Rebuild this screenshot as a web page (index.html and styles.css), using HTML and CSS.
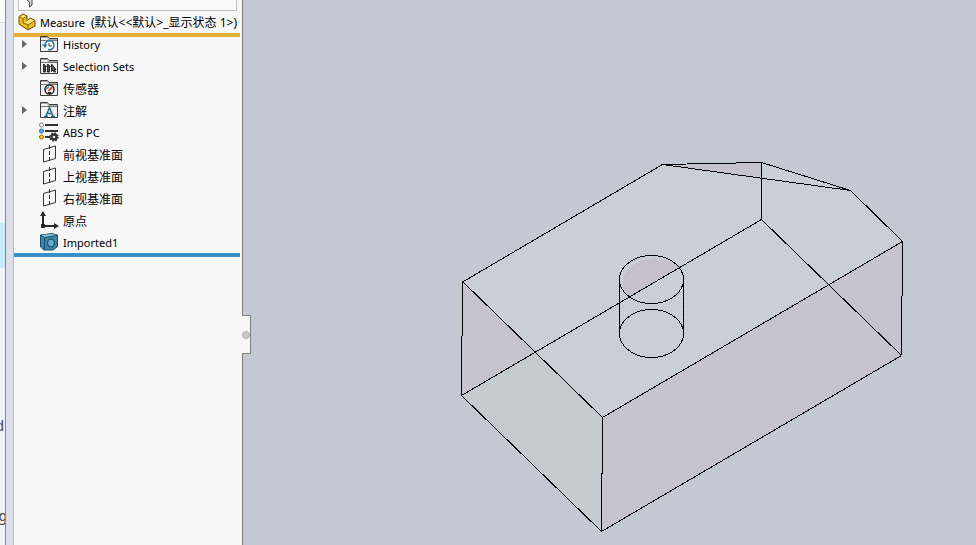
FILE: index.html
```html
<!DOCTYPE html>
<html lang="zh-CN">
<head>
<meta charset="utf-8">
<title>Measure</title>
<link rel="stylesheet" href="styles.css">
</head>
<body>
<svg class="defs" aria-hidden="true">
  <symbol id="folder" viewBox="0 0 20 18">
    <path d="M0.500 16.500V1.500H7.500L9 3.500H17.500V16.500Z" fill="#f2f2f2" stroke="#3c3c3c"/>
    <path d="M1 2.500H8V4.500H17" fill="none" stroke="#aaa"/>
    <path d="M1 5.500H17" stroke="#777"/>
  </symbol>
  <symbol id="plane" viewBox="0 0 20 18">
    <path d="M3.500 4.500L15.500 1V13.500L3.500 17Z" fill="none" stroke="#333"/>
    <path d="M9.500 0V18" stroke="#333" stroke-dasharray="4 2"/>
  </symbol>
</svg>
<div class="app">
  <aside class="edge">
    <div class="edge-top"></div>
    <div class="edge-selected"></div>
    <span class="edge-text first">d</span>
    <span class="edge-text second">g</span>
  </aside>
  <div class="splitter"></div>
  <section class="panel">
    <div class="filter"><svg viewBox="0 0 10 8" width="10" height="8"><path d="M1 0L3.500 2V7L6 5V0" fill="#ddd" stroke="#444"/></svg></div>
    <h1 class="title">
      <svg width="18" height="18" viewBox="0 0 18 18"><path d="M1 3.500L5 1L9 3V7.500L12.500 5L17 7.500V13L10 17L1 11Z" fill="#f0bd24" stroke="#6b4c0a"/><path d="M1 3.500L5 5.500L9 3M5 5.500V10L10 12L17 7.500M10 12V17" fill="none" stroke="#8b6510"/><path d="M2.500 3.500L5 2L8 3.200L5 4.900Z M6.500 9.500L12.500 6L16 7.800L10 11Z" fill="#ffe77c"/></svg>
      <span>Measure</span><span class="config">(<b>默认</b>&lt;&lt;<b>默认</b>&gt;_<b>显示状态</b> 1&gt;)</span>
    </h1>
    <ul class="tree">
      <li><i class="arrow"></i><svg viewBox="0 0 20 18"><use href="#folder"/><path d="M5 10A4.500 4.500 0 1 1 8 14.500" fill="#fff" stroke="#267da4" stroke-width="1.500"/><path d="M2 9.500L5 13L7.500 9.500Z" fill="#267da4"/><path d="M9 8V11H12" fill="none" stroke="#333"/></svg><span>History</span></li>
      <li><i class="arrow"></i><svg viewBox="0 0 20 18"><use href="#folder"/><path d="M3.500 7V15H5.500V9ZM7.500 7V15H9.500V9ZM11.500 7V14.500L13 13L14 15H15.500L14.500 12.500H16Z" fill="#555" stroke="#222"/><path d="M4 7L8 11M8 7L12 11" stroke="#444"/></svg><span>Selection Sets</span></li>
      <li><i></i><svg viewBox="0 0 20 18"><use href="#folder"/><circle cx="9.500" cy="10.500" r="4.500" fill="#fff" stroke="#222" stroke-width="1.500"/><path d="M6 10L9 7.500" stroke="#45a1c9" stroke-width="2"/><path d="M8.500 12L12.500 8" stroke="#e33d1c" stroke-width="2"/><path d="M8 14H11" stroke="#222" stroke-width="2"/></svg><b>传感器</b></li>
      <li><i class="arrow"></i><svg viewBox="0 0 20 18"><use href="#folder"/><path d="M4 15.500H8M11 15.500H15M6 15L9.500 6.500L13 15M7.500 12.500H12" fill="none" stroke="#246889" stroke-width="1.500"/></svg><b>注解</b></li>
      <li><i></i><svg viewBox="0 0 20 18" overflow="visible"><path d="M5 2H18M5 8H18M5 14H10" stroke="#333" stroke-width="2"/><circle cx="1.500" cy="2" r="2" fill="#fff" stroke="#777"/><circle cx="1.500" cy="8" r="2" fill="#5aafdb" stroke="#246889"/><circle cx="1.500" cy="14" r="2" fill="#ffcc1c" stroke="#8b6510"/><circle cx="14" cy="14" r="2.500" fill="none" stroke="#333" stroke-width="2.500"/><circle cx="14" cy="14" r="4" fill="none" stroke="#333" stroke-width="1.500" stroke-dasharray="1.600 1.540"/></svg><span>ABS PC</span></li>
      <li><i></i><svg viewBox="0 0 20 18"><use href="#plane"/></svg><b>前视基准面</b></li>
      <li><i></i><svg viewBox="0 0 20 18"><use href="#plane"/></svg><b>上视基准面</b></li>
      <li><i></i><svg viewBox="0 0 20 18"><use href="#plane"/></svg><b>右视基准面</b></li>
      <li><i></i><svg viewBox="0 0 20 18"><path d="M3 3V15H15" fill="none" stroke="#262626" stroke-width="2"/><path d="M0 5L3 0L6 5ZM14 12L19 15L14 18ZM1 13H5V17H1Z" fill="#262626"/></svg><b>原点</b></li>
      <li><i></i><svg viewBox="0 0 20 18"><path d="M0.500 2L12 0.500L17.500 2V13.500L13 17L4 17L0.500 14Z" fill="#3a86aa" stroke="#184c64"/><path d="M1 2L12 1L17 2L4.500 4.500Z" fill="#8dc4dc"/><path d="M1 2L4.500 4.500V16M4.500 4.500L17 2.500" fill="none" stroke="#184c64"/><ellipse cx="11" cy="10" rx="3.500" ry="4" fill="#5faed0" stroke="#103e54"/></svg><span>Imported1</span></li>
    </ul>
    <div class="rollback"></div>
    <button class="handle" aria-label="Toggle panel"></button>
  </section>
  <main class="viewport">
    <svg viewBox="243 0 733 545" preserveAspectRatio="xMinYMin meet" role="img" aria-label="Model">
      <defs>
        <pattern id="light" width="4" height="4" patternUnits="userSpaceOnUse"><path d="M0 0h1v1h-1zM2 0h1v1h-1zM0 2h1v1h-1zM2 2h1v1h-1zM1 1h1v1h-1zM3 3h1v1h-1z" fill="#d0d6dc"/></pattern>
        <pattern id="mauve" width="2" height="2" patternUnits="userSpaceOnUse"><path d="M0 0h1v1h-1z" fill="#c5bfcc"/></pattern>
        <pattern id="green" width="2" height="2" patternUnits="userSpaceOnUse"><path d="M0 0h1v1h-1z" fill="#c5cccf"/></pattern>
      </defs>
      <g shape-rendering="crispEdges">
        <path d="M463 281L663 164L850 190L902 241L602 417Z" fill="#c5c9d3"/>
        <path d="M463 281L663 164L850 190L902 241L602 417Z" fill="url(#light)"/>
        <path d="M761 162L850 190L761 178Z" fill="#c9ced7"/>
        <path d="M463 281L535 352L461 395ZM602 417L902 241L901 356L601 531ZM663 164L761 162V178Z" fill="#c5c4d0"/>
        <path d="M463 281L535 352L461 395ZM602 417L902 241L901 356L601 531ZM663 164L761 162V178Z" fill="url(#mauve)" opacity="0.700"/>
        <path d="M461 395L535 352L602 417L601 531Z" fill="#c5cad1"/>
        <path d="M461 395L535 352L602 417L601 531Z" fill="url(#green)" opacity="0.700"/>
        <path d="M629 297A32 24 0 0 1 680 268Z" fill="#c5c2ce"/>
        <path d="M629 297A32 24 0 0 1 680 268Z" fill="url(#mauve)"/>
        <g fill="none" stroke="#000">
          <path d="M463.500 281.500L662.500 164.500L761.500 162.500L850.500 190.500L902.500 241.500L901.500 355.500L601.500 531.500L461.500 395.500L462.500 281.500L602.500 417.500L902.500 241.500M602.500 417.500L601.500 531.500M662.500 164.500L850.500 190.500M761.500 162.500V219.500L461.500 395.500M761.500 219.500L901.500 355.500"/>
          <ellipse cx="651.500" cy="279.500" rx="32" ry="24"/>
          <ellipse cx="651.500" cy="333.500" rx="32" ry="24"/>
          <path d="M619.500 279V334M683.500 279V334"/>
        </g>
      </g>
    </svg>
  </main>
</div>
</body>
</html>
```
FILE: styles.css
```css
* { box-sizing: border-box; }
body { margin: 0; font-family: "Noto Sans", "Noto Sans CJK SC", sans-serif; font-size: 11px; color: #000; }
.defs { position: absolute; width: 0; height: 0; }
.app { display: flex; height: 100vh; overflow: hidden; background: #c4c8d3; }
.edge { position: relative; flex: 0 0 6px; overflow: hidden; background: #eff2f8; border-right: 1px solid #888; }
.edge-top { height: 23px; background: #fff; border-bottom: 1px solid #dde; }
.edge-selected { height: 45px; margin-top: 200px; background: #c5ecfc; }
.edge-text { position: absolute; right: 1px; font-size: 14px; line-height: 20px; color: #444; }
.first { top: 416px; }
.second { top: 506px; right: -2px; }
.splitter { flex: 0 0 8px; background: #dcdee9; border-right: 1px solid #b9b9c0; }
.panel { position: relative; flex: 0 0 229px; background: #f7f7f7; border-right: 1px solid #808080; }
.filter { height: 11px; margin: 0 5px 0 4px; padding-left: 7px; border: 1px solid #c0c0c0; border-top: 0; background: #f9f9f9; }
.filter svg { display: block; }
.title { display: flex; align-items: center; height: 22px; margin: 0; padding-left: 4px; font-size: 11px; font-weight: 400; white-space: nowrap; }
.title svg { flex: none; margin-right: 4px; }
.config { margin-left: 6px; font-size: 12px; }
b { font-size: 12px; font-weight: 400; font-family: "Noto Sans CJK SC", sans-serif; }
.tree { margin: 0 2px 0 0; padding: 0; list-style: none; border-top: 4px solid #e6b035; }
.tree li { display: flex; align-items: center; height: 22px; padding-left: 8px; }
.tree li:first-child { margin-top: -4px; }
.tree svg { flex: none; width: 20px; height: 18px; margin-right: 3px; }
.tree i { flex: none; width: 5px; height: 8px; margin-right: 13px; }
.tree .arrow { background: #666; clip-path: polygon(0 0, 100% 50%, 0 100%); }
.rollback { height: 4px; margin-right: 2px; background: #3a8fc4; }
.handle { position: absolute; top: 315px; right: -9px; width: 9px; height: 39px; padding: 0; border: 1px solid #808080; border-left: 0; background: #f7f7f7; }
.handle::before { content: ""; display: block; width: 6px; height: 6px; border: 1px solid #aaa; border-radius: 50%; background: #ccc; }
.viewport { flex: 1; min-width: 0; }
.viewport svg { display: block; width: 100%; height: 100%; }
```
